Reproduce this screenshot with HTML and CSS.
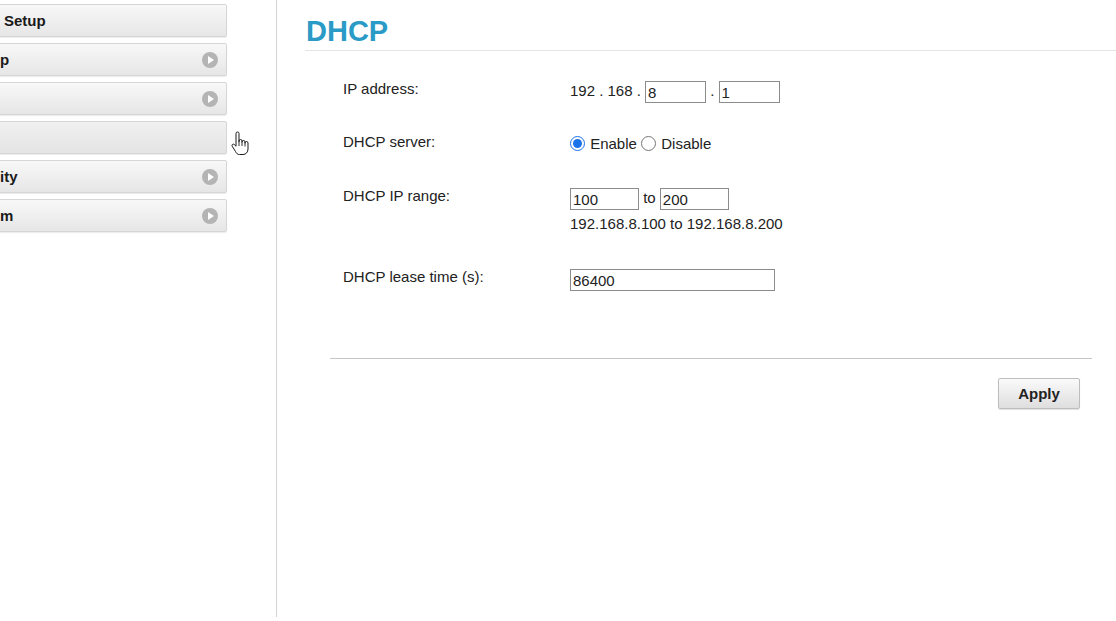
FILE: index.html
```html
<!DOCTYPE html>
<html lang="en">
<head>
    <meta charset="UTF-8">
    <title>DHCP</title>
    <link rel="stylesheet" href="styles.css">
</head>
<body>
    <div class="page">
        <div class="sidebar">
            <ul class="menu">
                <li class="first">Setup</li>
                <li>p <span class="arrow"></span></li>
                <li><span></span> <span class="arrow"></span></li>
                <li class="open"></li>
                <li>ity <span class="arrow"></span></li>
                <li>m <span class="arrow"></span></li>
            </ul>
            <svg class="cursor" width="20" height="25" viewBox="0 0 20 25">
                <path d="M6 2.5a1.5 1.5 0 0 1 3 0V11V10a1.5 1.5 0 0 1 3 0v1.5V11a1.5 1.5 0 0 1 3 0v1.5V12a1.5 1.5 0 0 1 3 0v6c0 3-2 5.5-5 5.5H9.5c-2 0-3-1-4-3L2.2 15.2c-.9-1.4.9-2.8 2.2-1.6L6 15.2z" fill="#fff" stroke="#1a1a1a" stroke-width="1" stroke-linejoin="round"/>
                <path d="M9 11v4M12 11.5v3.5M15 12.5v3" stroke="#1a1a1a" stroke-width=".9"/>
            </svg>
        </div>
        <div class="main">
            <h1>DHCP</h1>
            <form class="form">
                <div class="row ip-row">
                    <label>IP address:</label>
                    <div class="value">192 . 168 . <input type="text" class="ip" value="8"> . <input type="text" class="ip" value="1"></div>
                </div>
                <div class="row">
                    <label>DHCP server:</label>
                    <div class="value radios">
                        <input type="radio" name="srv" checked> Enable
                        <input type="radio" name="srv"> Disable
                    </div>
                </div>
                <div class="row range">
                    <label>DHCP IP range:</label>
                    <div class="value">
                        <input type="text" class="short" value="100"> to <input type="text" class="short" value="200">
                        <div class="note">192.168.8.100 to 192.168.8.200</div>
                    </div>
                </div>
                <div class="row">
                    <label>DHCP lease time (s):</label>
                    <div class="value"><input type="text" class="long" value="86400"></div>
                </div>
            </form>
            <div class="actions">
                <button type="button">Apply</button>
            </div>
        </div>
    </div>
</body>
</html>
```

FILE: styles.css
```css
body {
    margin: 0;
    font-family: "Liberation Sans", Arial, sans-serif;
    background-color: #fff;
    color: #222;
    overflow: hidden;
}
.page {
    display: flex;
    height: 617px;
}
.sidebar {
    position: relative;
    width: 276px;
    border-right: 1px solid #d4d4d4;
    flex-shrink: 0;
}
.menu {
    list-style: none;
    margin: 4px 0 0 -2px;
    padding: 0;
    width: 229px;
    display: flex;
    flex-direction: column;
    gap: 6px;
}
.menu li {
    display: flex;
    align-items: center;
    justify-content: space-between;
    height: 31px;
    padding: 0 8px 0 1px;
    border: 1px solid #d6d6d6;
    border-radius: 2px;
    background: linear-gradient(#f8f8f8, #e6e6e6);
    box-shadow: 0 1px 1px rgba(0, 0, 0, 0.08);
    font-size: 15px;
    font-weight: bold;
    color: #1a1a1a;
}
.menu li.first {
    padding-left: 5px;
}
.menu li.open {
    background: linear-gradient(#f0f0f0, #e4e4e4);
}
.arrow {
    width: 16px;
    height: 16px;
    border-radius: 50%;
    background-color: #b4b4b4;
    position: relative;
}
.arrow::after {
    content: "";
    position: absolute;
    left: 6px;
    top: 4px;
    border-left: 6px solid #fff;
    border-top: 4px solid transparent;
    border-bottom: 4px solid transparent;
}
.cursor {
    position: absolute;
    left: 230px;
    top: 131px;
}
.main {
    flex: 1;
    padding-left: 28px;
}
h1 {
    margin: 0;
    height: 51px;
    padding: 15px 0 0 1px;
    box-sizing: border-box;
    border-bottom: 1px solid #e4e4e4;
    font-size: 29px;
    line-height: 32px;
    font-weight: bold;
    color: #2a9ac6;
}
.form {
    padding: 29px 0 0 38px;
    font-size: 15px;
}
.row {
    display: flex;
    height: 54px;
}
.row.ip-row {
    height: 53px;
}
.row label {
    width: 227px;
}
.row.range {
    height: 81px;
}
.value input[type="text"] {
    font-family: "Liberation Sans", Arial, sans-serif;
    font-size: 15px;
    height: 22px;
    box-sizing: border-box;
    border: 1px solid #8c8c8c;
    padding: 0 2px;
    margin: 0;
    color: #222;
    vertical-align: middle;
}
.value {
    line-height: 22px;
}
.ip {
    width: 61px;
}
.short {
    width: 69px;
}
.long {
    width: 205px;
}
.note {
    margin-top: 3px;
}
.radios input {
    margin: 0 1px 0 0;
    width: 15px;
    height: 15px;
    vertical-align: -2px;
    accent-color: #1a73e8;
}
.actions {
    margin: 36px 24px 0 25px;
    border-top: 1px solid #c6c6c6;
    padding: 19px 12px 0 0;
    text-align: right;
}
.actions button {
    width: 82px;
    height: 31px;
    border: 1px solid #bdbdbd;
    border-radius: 2px;
    background: linear-gradient(#fafafa, #dedede);
    box-shadow: 0 1px 1px rgba(0, 0, 0, 0.12);
    font-family: "Liberation Sans", Arial, sans-serif;
    font-size: 15px;
    font-weight: bold;
    color: #222;
    cursor: pointer;
}
```
